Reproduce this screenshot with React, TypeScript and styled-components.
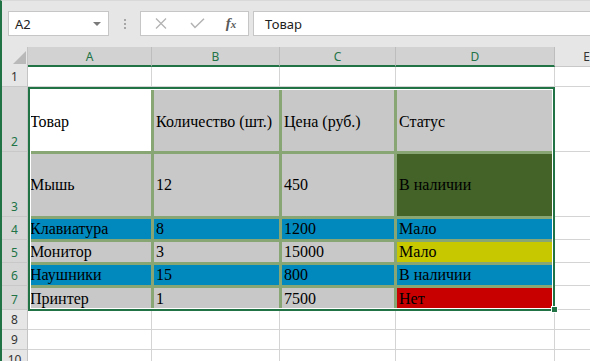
import React from "react";
import styled, { createGlobalStyle } from "styled-components";

const GREEN = "#217346";
const FILLS: Record<string, string> = {
  white: "#ffffff",
  gray: "#c8c8c8",
  blue: "#0189be",
  dark: "#436328",
  yellow: "#c8c800",
  red: "#c80000",
};

const Global = createGlobalStyle`
  html, body { margin: 0; padding: 0; background: #e6e6e6; overflow: hidden; }
  #root { width: 590px; height: 361px; }
`;

const Window = styled.div`
  width: 590px;
  height: 361px;
  box-sizing: border-box;
  overflow: hidden;
  background: #e6e6e6;
  border-left: 2px solid ${GREEN};
  border-top: 1px solid #d9d9d9;
  font-family: "Noto Sans", "Open Sans", sans-serif;
`;

const FormulaBar = styled.div`
  display: flex;
  height: 25px;
  margin: 10px 0 11px 6px;
  width: 640px;
`;

const NameBox = styled.div`
  width: 101px;
  box-sizing: border-box;
  border: 1px solid #c6c6c6;
  background: #fff;
  display: flex;
  align-items: center;
  justify-content: space-between;
  padding: 0 7px 0 6px;
  font-size: 13px;
  color: #222;
`;

const DropArrow = styled.span`
  width: 0;
  height: 0;
  border-style: solid;
  border-width: 4px 4px 0 4px;
  border-color: #7a7a7a transparent transparent transparent;
`;

const Separator = styled.div`
  width: 31px;
  display: flex;
  flex-direction: column;
  align-items: center;
  justify-content: center;
  gap: 2px;
`;

const Dot = styled.span`
  width: 2px;
  height: 2px;
  background: #a6a6a6;
`;

const FxBox = styled.div`
  width: 109px;
  box-sizing: border-box;
  border: 1px solid #c6c6c6;
  background: #fff;
  display: grid;
  grid-template-columns: 39px 34px 34px;
  align-items: center;
  justify-items: center;
`;

const FxText = styled.span`
  font-family: "Liberation Serif", serif;
  font-style: italic;
  font-weight: bold;
  font-size: 15px;
  color: #5a5a5a;
  line-height: 1;
  & > small {
    font-size: 11px;
  }
`;

const FormulaInput = styled.div`
  flex: 1;
  margin-left: 4px;
  box-sizing: border-box;
  border: 1px solid #c6c6c6;
  border-right: none;
  background: #fff;
  display: flex;
  align-items: center;
  padding-left: 11px;
  font-size: 13px;
  color: #222;
`;

const Sheet = styled.div`
  display: grid;
  grid-template-columns: 26px 124px 128px 116px 159px 64px;
  grid-template-rows: 20px 20px 65px 65px 23px 23px 23px 24px 20px 20px 20px;
  width: max-content;
`;

const Corner = styled.div`
  background: #e6e6e6;
  border-right: 1px solid #c4c4c4;
  display: flex;
  align-items: flex-end;
  justify-content: flex-end;
`;

const CornerTriangle = styled.span`
  width: 0;
  height: 0;
  border-style: solid;
  border-width: 0 0 13px 13px;
  border-color: transparent transparent #b9b9b9 transparent;
  margin: 0 1px 3px 0;
`;

const ColHeader = styled.div<{ $sel?: boolean }>`
  box-sizing: border-box;
  display: flex;
  align-items: center;
  justify-content: center;
  background: ${(p) => (p.$sel ? "#d2d2d2" : "#e6e6e6")};
  color: ${(p) => (p.$sel ? GREEN : "#333")};
  border-right: 1px solid #bdbdbd;
  border-bottom: ${(p) => (p.$sel ? `2px solid ${GREEN}` : "1px solid #c8c8c8")};
  font-size: 12px;
`;

const RowHeader = styled.div<{ $sel?: boolean }>`
  box-sizing: border-box;
  display: flex;
  align-items: flex-end;
  justify-content: center;
  padding-bottom: 2px;
  background: ${(p) => (p.$sel ? "#d6d6d6" : "#e6e6e6")};
  color: ${(p) => (p.$sel ? GREEN : "#333")};
  border-right: 1px solid #c4c4c4;
  border-bottom: 1px solid #c8c8c8;
  font-size: 12px;
  line-height: 15px;
`;

const Cell = styled.div`
  box-sizing: border-box;
  background: #fff;
  border-right: 1px solid #d4d4d4;
  border-bottom: 1px solid #d4d4d4;
`;

const DataBlock = styled.div`
  grid-column: 2 / 6;
  grid-row: 3 / 9;
  position: relative;
  display: grid;
  grid-template-columns: 123px 125px 112px 158px;
  grid-template-rows: 64px 62px 20px 20px 20px 22px;
  gap: 3px;
  background: #88a674;
`;

const DataCell = styled.div<{ $fill: string; $head?: boolean }>`
  box-sizing: border-box;
  display: flex;
  align-items: center;
  padding: ${(p) => (p.$head ? "5px 0 0 2px" : "0 0 0 2px")};
  background: ${(p) => FILLS[p.$fill]};
  color: #000;
  font-family: "Liberation Serif", "Times New Roman", serif;
  font-size: 16px;
  white-space: nowrap;
  overflow: hidden;
`;

const Selection = styled.div`
  position: absolute;
  left: 0;
  top: 0;
  right: 0;
  bottom: -1px;
  box-sizing: border-box;
  border: 2px solid ${GREEN};
  box-shadow: inset 0 0 0 1px #fff;
  pointer-events: none;
  z-index: 2;
`;

const FillHandle = styled.span`
  position: absolute;
  right: -5px;
  bottom: -4px;
  width: 5px;
  height: 5px;
  background: ${GREEN};
  border: 1px solid #fff;
`;

const rows: [string, string][][] = [
  [["Товар", "white"], ["Количество (шт.)", "gray"], ["Цена (руб.)", "gray"], ["Статус", "gray"]],
  [["Мышь", "gray"], ["12", "gray"], ["450", "gray"], ["В наличии", "dark"]],
  [["Клавиатура", "blue"], ["8", "blue"], ["1200", "blue"], ["Мало", "blue"]],
  [["Монитор", "gray"], ["3", "gray"], ["15000", "gray"], ["Мало", "yellow"]],
  [["Наушники", "blue"], ["15", "blue"], ["800", "blue"], ["В наличии", "blue"]],
  [["Принтер", "gray"], ["1", "gray"], ["7500", "gray"], ["Нет", "red"]],
];

const CrossIcon = () => (
  <svg width="12" height="11" viewBox="0 0 12 11">
    <path d="M1 0.5 L11 10.5 M11 0.5 L1 10.5" stroke="#b3b3b3" strokeWidth="1.3" fill="none" />
  </svg>
);

const CheckIcon = () => (
  <svg width="15" height="11" viewBox="0 0 15 11">
    <path d="M1 5 L5 9.5 L14 0.8" stroke="#b3b3b3" strokeWidth="1.5" fill="none" />
  </svg>
);

export default function App() {
  const cols = ["A", "B", "C", "D"];
  return (
    <>
      <Global />
      <Window>
        <FormulaBar>
          <NameBox>
            <span>A2</span>
            <DropArrow />
          </NameBox>
          <Separator>
            <Dot />
            <Dot />
            <Dot />
          </Separator>
          <FxBox>
            <CrossIcon />
            <CheckIcon />
            <FxText>
              f<small>x</small>
            </FxText>
          </FxBox>
          <FormulaInput>Товар</FormulaInput>
        </FormulaBar>
        <Sheet>
          <Corner>
            <CornerTriangle />
          </Corner>
          {cols.map((c) => (
            <ColHeader key={c} $sel>
              {c}
            </ColHeader>
          ))}
          <ColHeader>E</ColHeader>

          <RowHeader>1</RowHeader>
          {cols.map((c) => (
            <Cell key={`1${c}`} />
          ))}
          <Cell />

          <DataBlock>
            {rows.map((r, ri) =>
              r.map(([text, fill], ci) => (
                <DataCell key={`${ri}-${ci}`} $fill={fill} $head={ri === 0}>
                  {text}
                </DataCell>
              ))
            )}
            <Selection>
              <FillHandle />
            </Selection>
          </DataBlock>

          {[2, 3, 4, 5, 6, 7].map((n, i) => (
            <React.Fragment key={n}>
              <RowHeader $sel style={{ gridRow: i + 3, gridColumn: 1 }}>
                {n}
              </RowHeader>
              <Cell style={{ gridRow: i + 3, gridColumn: 6 }} />
            </React.Fragment>
          ))}

          {[8, 9, 10].map((n) => (
            <React.Fragment key={n}>
              <RowHeader>{n}</RowHeader>
              {cols.map((c) => (
                <Cell key={`${n}${c}`} />
              ))}
              <Cell />
            </React.Fragment>
          ))}
        </Sheet>
      </Window>
    </>
  );
}
